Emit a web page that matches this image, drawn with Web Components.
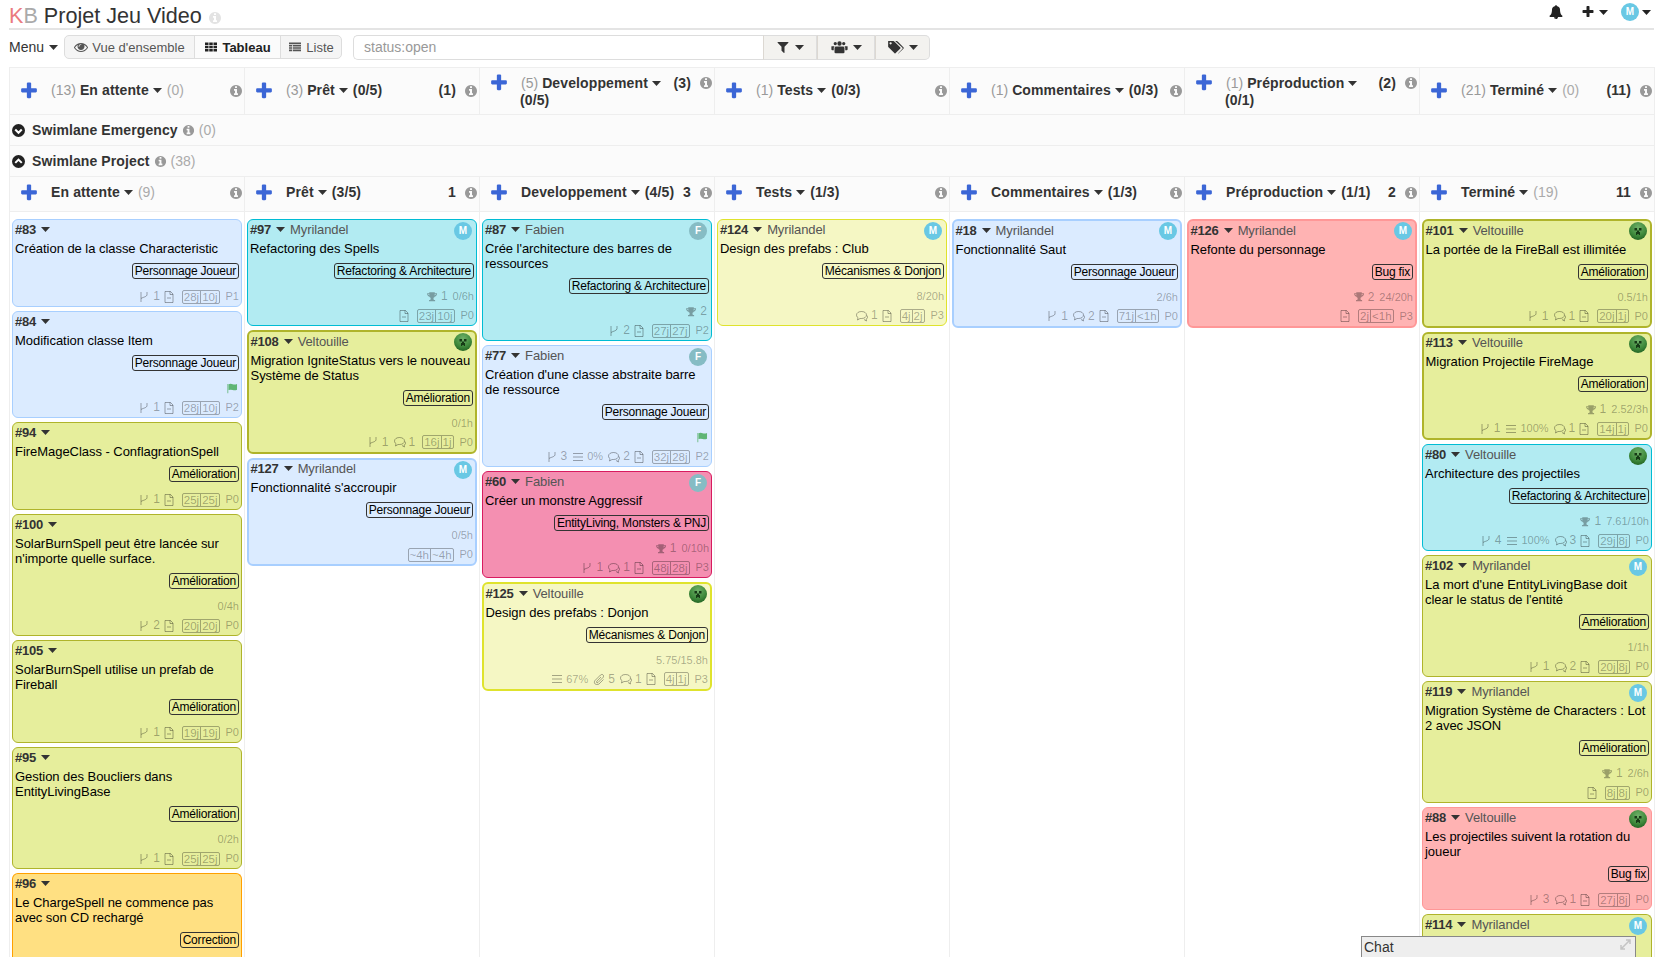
<!DOCTYPE html>
<html lang="fr">
<head>
<meta charset="utf-8">
<title>Projet Jeu Video</title>
<style>
    html, body { margin: 0; height: 957px; overflow: hidden; background: #fff; }
    body { font: 14px "Liberation Sans", Arial, sans-serif; color: #333; }
</style>
</head>
<body>
<kb-page>
    <kb-topbar slot="top"></kb-topbar>
    <kb-toolbar slot="top"></kb-toolbar>
    <kb-board>
        <kb-head total="13" name="En attente" count="(0)"></kb-head>
        <kb-head total="3" name="Prêt" limit="(0/5)" right="(1)"></kb-head>
        <kb-head total="5" name="Developpement" wrap="(0/5)" right="(3)"></kb-head>
        <kb-head total="1" name="Tests" limit="(0/3)"></kb-head>
        <kb-head total="1" name="Commentaires" limit="(0/3)"></kb-head>
        <kb-head total="1" name="Préproduction" wrap="(0/1)" right="(2)"></kb-head>
        <kb-head total="21" name="Terminé" count="(0)" right="(11)"></kb-head>

        <kb-swimlane name="Swimlane Emergency" count="(0)" closed></kb-swimlane>
        <kb-swimlane name="Swimlane Project" count="(38)"></kb-swimlane>

        <kb-head sub name="En attente" count="(9)"></kb-head>
        <kb-head sub name="Prêt" limit="(3/5)" right="1"></kb-head>
        <kb-head sub name="Developpement" limit="(4/5)" right="3"></kb-head>
        <kb-head sub name="Tests" limit="(1/3)"></kb-head>
        <kb-head sub name="Commentaires" limit="(1/3)"></kb-head>
        <kb-head sub name="Préproduction" limit="(1/1)" right="2"></kb-head>
        <kb-head sub name="Terminé" count="(19)" right="11"></kb-head>

        <kb-column>
            <kb-task num="83" color="blue" tag="Personnage Joueur" fork="1" file dates="28j,10j" prio="P1">Création de la classe Characteristic</kb-task>
            <kb-task num="84" color="blue" tag="Personnage Joueur" flag fork="1" file dates="28j,10j" prio="P2">Modification classe Item</kb-task>
            <kb-task num="94" color="lime" tag="Amélioration" fork="1" file dates="25j,25j" prio="P0">FireMageClass - ConflagrationSpell</kb-task>
            <kb-task num="100" color="lime" tag="Amélioration" time="0/4h" fork="2" file dates="20j,20j" prio="P0">SolarBurnSpell peut être lancée sur n'importe quelle surface.</kb-task>
            <kb-task num="105" color="lime" tag="Amélioration" fork="1" file dates="19j,19j" prio="P0">SolarBurnSpell utilise un prefab de Fireball</kb-task>
            <kb-task num="95" color="lime" tag="Amélioration" time="0/2h" fork="1" file dates="25j,25j" prio="P0">Gestion des Boucliers dans EntityLivingBase</kb-task>
            <kb-task num="96" color="amber" tag="Correction" cut="85">Le ChargeSpell ne commence pas avec son CD rechargé</kb-task>
        </kb-column>
        <kb-column>
            <kb-task num="97" owner="Myrilandel" avatar="M" color="cyan" tag="Refactoring &amp; Architecture" trophy="1" time="0/6h" file dates="23j,10j" prio="P0">Refactoring des Spells</kb-task>
            <kb-task num="108" owner="Veltouille" avatar="creeper" color="lime" thick tag="Amélioration" time="0/1h" fork="1" cmt="1" dates="16j,1j" prio="P0">Migration IgniteStatus vers le nouveau Système de Status</kb-task>
            <kb-task num="127" owner="Myrilandel" avatar="M" color="blue" thick tag="Personnage Joueur" time="0/5h" dates="~4h,~4h" prio="P0">Fonctionnalité s'accroupir</kb-task>
        </kb-column>
        <kb-column>
            <kb-task num="87" owner="Fabien" avatar="F" color="cyan" tag="Refactoring &amp; Architecture" trophy="2" fork="2" file dates="27j,27j" prio="P2">Crée l'architecture des barres de ressources</kb-task>
            <kb-task num="77" owner="Fabien" avatar="F" color="blue" tag="Personnage Joueur" flag fork="3" pct="0%" cmt="2" file dates="32j,28j" prio="P2">Création d'une classe abstraite barre de ressource</kb-task>
            <kb-task num="60" owner="Fabien" avatar="F" color="pink" tag="EntityLiving, Monsters &amp; PNJ" trophy="1" time="0/10h" fork="1" cmt="1" file dates="48j,28j" prio="P3">Créer un monstre Aggressif</kb-task>
            <kb-task num="125" owner="Veltouille" avatar="creeper" color="yellow" thick tag="Mécanismes &amp; Donjon" time="5.75/15.8h" pct="67%" clip="5" cmt="1" file dates="4j,1j" prio="P3">Design des prefabs : Donjon</kb-task>
        </kb-column>
        <kb-column>
            <kb-task num="124" owner="Myrilandel" avatar="M" color="yellow" tag="Mécanismes &amp; Donjon" time="8/20h" cmt="1" file dates="4j,2j" prio="P3">Design des prefabs : Club</kb-task>
        </kb-column>
        <kb-column>
            <kb-task num="18" owner="Myrilandel" avatar="M" color="blue" thick tag="Personnage Joueur" time="2/6h" fork="1" cmt="2" file dates="71j,&lt;1h" prio="P0">Fonctionnalité Saut</kb-task>
        </kb-column>
        <kb-column>
            <kb-task num="126" owner="Myrilandel" avatar="M" color="red" thick tag="Bug fix" trophy="2" time="24/20h" file dates="2j,&lt;1h" prio="P3">Refonte du personnage</kb-task>
        </kb-column>
        <kb-column>
            <kb-task num="101" owner="Veltouille" avatar="creeper" color="lime" thick tag="Amélioration" time="0.5/1h" fork="1" cmt="1" file dates="20j,1j" prio="P0">La portée de la FireBall est illimitée</kb-task>
            <kb-task num="113" owner="Veltouille" avatar="creeper" color="lime" thick tag="Amélioration" trophy="1" time="2.52/3h" fork="1" pct="100%" cmt="1" file dates="14j,1j" prio="P0">Migration Projectile FireMage</kb-task>
            <kb-task num="80" owner="Veltouille" avatar="creeper" color="cyan" tag="Refactoring &amp; Architecture" trophy="1" time="7.61/10h" fork="4" pct="100%" cmt="3" file dates="29j,8j" prio="P0">Architecture des projectiles</kb-task>
            <kb-task num="102" owner="Myrilandel" avatar="M" color="lime" tag="Amélioration" time="1/1h" fork="1" cmt="2" file dates="20j,8j" prio="P0">La mort d'une EntityLivingBase doit clear le status de l'entité</kb-task>
            <kb-task num="119" owner="Myrilandel" avatar="M" color="lime" tag="Amélioration" trophy="1" time="2/6h" file dates="8j,8j" prio="P0">Migration Système de Characters : Lot 2 avec JSON</kb-task>
            <kb-task num="88" owner="Veltouille" avatar="creeper" color="red" tag="Bug fix" fork="3" cmt="1" file dates="27j,8j" prio="P0">Les projectiles suivent la rotation du joueur</kb-task>
            <kb-task num="114" owner="Myrilandel" avatar="M" color="lime" cut="44"></kb-task>
        </kb-column>
    </kb-board>
</kb-page>
<kb-chat></kb-chat>

<script>
// font-awesome style icons, on the 1792 grid
const FA = {
    plus: 'M1600 736v192q0 40-28 68t-68 28h-416v416q0 40-28 68t-68 28h-192q-40 0-68-28t-28-68v-416h-416q-40 0-68-28t-28-68v-192q0-40 28-68t68-28h416v-416q0-40 28-68t68-28h192q40 0 68 28t28 68v416h416q40 0 68 28t28 68z',
    info: 'M1152 1376v-160q0-14-9-23t-23-9h-96v-512q0-14-9-23t-23-9h-320q-14 0-23 9t-9 23v160q0 14 9 23t23 9h96v320h-96q-14 0-23 9t-9 23v160q0 14 9 23t23 9h448q14 0 23-9t9-23zm-128-896v-160q0-14-9-23t-23-9h-192q-14 0-23 9t-9 23v160q0 14 9 23t23 9h192q14 0 23-9t9-23zm640 416q0 209-103 385.5t-279.5 279.5-385.5 103-385.5-103-279.5-279.5-103-385.5 103-385.5 279.5-279.5 385.5-103 385.5 103 279.5 279.5 103 385.5z',
    bell: 'M912 1696q0-16-16-16-59 0-101.500-42.500t-42.500-101.500q0-16-16-16t-16 16q0 73 51.500 124.500t124.500 51.500q16 0 16-16zm816-288q0 52-38 90t-90 38h-448q0 106-75 181t-181 75-181-75-75-181h-448q-52 0-90-38t-38-90q50-42 91-88t85-119.500 74.500-158.500 50-206 19.500-260q0-152 117-282.500t307-158.500q-8-19-8-39 0-40 28-68t68-28 68 28 28 68q0 20-8 39 190 28 307 158.500t117 282.500q0 139 19.500 260t50 206 74.500 158.500 85 119.500 91 88z',
    filter: 'M1595 295q17 41-14 70l-493 493v742q0 42-39 59-13 5-25 5-27 0-45-19l-256-256q-19-19-19-45v-486l-493-493q-31-29-14-70 17-39 59-39h1280q42 0 59 39z',
    eye: 'M1664 960q-152-236-381-353 61 104 61 225 0 185-131.500 316.500t-316.500 131.500-316.500-131.500-131.500-316.500q0-121 61-225-229 117-381 353 133 205 333.500 326.500t434.500 121.500 434.500-121.500 333.500-326.500zm-720-384q0-20-14-34t-34-14q-125 0-214.500 89.500t-89.500 214.500q0 20 14 34t34 14 34-14 14-34q0-86 61-147t147-61q20 0 34-14t14-34zm848 384q0 34-20 69-140 230-376.500 368.500t-499.500 138.500-499.500-139-376.500-368q-20-35-20-69t20-69q140-229 376.500-368t499.500-139 499.500 139 376.500 368q20 35 20 69z',
    th: 'M128 320h448v320h-448zM672 320h448v320h-448zM1216 320h448v320h-448zM128 736h448v320h-448zM672 736h448v320h-448zM1216 736h448v320h-448zM128 1152h448v320h-448zM672 1152h448v320h-448zM1216 1152h448v320h-448z',
    list: 'M128 320h1536v224h-1536zM128 640h400v192h-400zM620 640h1044v192h-1044zM128 928h400v192h-400zM620 928h1044v192h-1044zM128 1216h400v224h-400zM620 1216h1044v224h-1044z',
    users: 'M896 700a230 230 0 1 0 0-460 230 230 0 0 0 0 460zM450 660a175 175 0 1 0 0-350 175 175 0 0 0 0 350zM1342 660a175 175 0 1 0 0-350 175 175 0 0 0 0 350zM500 800h792q130 0 130 170v420q0 120-130 120h-792q-130 0-130-120v-420q0-170 130-170zM60 760h320q-90 60-90 220v200h-150q-100 0-100-90v-200q0-130 20-130zM1412 760h320q20 0 20 130v200q0 90-100 90h-150v-200q0-160-90-220z',
    tags: 'M120 220h560q50 0 90 40l640 640q40 40 0 90l-520 520q-50 40-90 0l-640-640q-40-40-40-90zM380 570a120 120 0 1 0 0-240 120 120 0 0 0 0 240zM860 220h180q50 0 90 40l620 640q40 40 0 90l-520 520q-30 30-70 20l470-490q60-70 0-130z',
    trophy: 'M480 200h832v130h300q40 0 40 60 0 170-90 290t-270 170q-60 110-170 170v190q0 60 40 100t110 40h60q30 0 30 40v130h-912v-130q0-40 30-40h60q70 0 110-40t40-100v-190q-110-60-170-170-180-50-270-170t-90-290q0-60 40-60h300zM320 460q10 120 200 220-30-100-40-220zM1472 460h-160q-10 120-40 220 190-100 200-220z',
    flag: 'M200 260h110v1300h-110zM360 300q280-110 560 0t600-30v800q-300 130-600 30t-560 10z'
};

function fa(name, size, color) {
    return `<svg width="${size}" height="${size}" viewBox="0 0 1792 1792" fill="${color || 'currentColor'}" style="display:block;flex:none"><path fill-rule="evenodd" d="${FA[name]}"/></svg>`;
}

function caret(color) {
    return `<svg width="9" height="5" viewBox="0 0 9 5" style="display:block;flex:none"><path d="M0 0h9L4.500 5z" fill="${color || 'currentColor'}"/></svg>`;
}

// thin line icons of the card footer, drawn on a 12 grid
const LINE = {
    fork: '<path d="M3 1v10M9 1v2.500C9 6 5 6 3 7.500"/>',
    file: '<path d="M2 .5h5.500L10 3v8.500H2zM7 .5V3.500H10M4 7h4"/>',
    cmt: '<path d="M.5 5C.5 3 2.500 1.500 5.500 1.500S10.500 3 10.500 5 8.500 8.500 5.500 8.500H4L1.500 10l.5-2.300C1 7 .5 6 .5 5z"/><path d="M11 5.500c1 .7 1 3-1 3.800l.5 1.700-2.500-1.500"/>',
    bars: '<path d="M1 2.500h10M1 6h10M1 9.500h10"/>',
    clip: '<path d="M10.500 6.500 6 11C3 13 0 10 2 7.500L7.500 2C9.500.5 11.500 2.500 10 4.500L5 9.500C4 10.300 3 9.300 3.800 8.300L8 4"/>'
};

function line(name) {
    return `<svg width="12" height="12" viewBox="0 0 12 12" fill="none" stroke="currentColor" stroke-width="1" style="display:block;flex:none">${LINE[name]}</svg>`;
}

class KbPage extends HTMLElement {
    constructor() {
        super();
        this.attachShadow({ mode: 'open' });
        this.shadowRoot.innerHTML = `
            <style>
                :host { display: block; padding: 0 17px 0 9px; }
            </style>
            <slot name="top"></slot>
            <slot></slot>
        `;
    }
}

class KbTopbar extends HTMLElement {
    constructor() {
        super();
        this.attachShadow({ mode: 'open' });
        this.shadowRoot.innerHTML = `
            <style>
                :host {
                    display: flex;
                    align-items: center;
                    height: 28px;
                    border-bottom: 2px solid #e4e4e4;
                    color: #333;
                }
                h1 { margin: 4px 0 0; font: normal 21.6px/24px "Liberation Sans", Arial, sans-serif; color: #333; }
                .k { color: #ea7a7f; }
                .b { color: #aaa; }
                .hint { margin: 7px 0 0 6px; }
                .actions { margin-left: auto; margin-bottom: 4px; display: flex; align-items: center; color: #222; padding-right: 3px; }
                .av {
                    width: 18px; height: 18px; border-radius: 50%;
                    background: #69c8e4; color: #fff;
                    font: bold 10px/18px "Liberation Sans", Arial, sans-serif;
                    text-align: center;
                }
            </style>
            <h1><span class="k">K</span><span class="b">B</span> Projet Jeu Video</h1>
            <span class="hint">${fa('info', 14, '#e3e3e3')}</span>
            <div class="actions">
                ${fa('bell', 14)}
                <span style="width:18px"></span>
                ${fa('plus', 14)}
                <span style="width:4px"></span>
                ${caret()}
                <span style="width:13px"></span>
                <span class="av">M</span>
                <span style="width:3px"></span>
                ${caret()}
            </div>
        `;
    }
}

class KbToolbar extends HTMLElement {
    constructor() {
        super();
        this.attachShadow({ mode: 'open' });
        this.shadowRoot.innerHTML = `
            <style>
                :host {
                    display: flex;
                    align-items: center;
                    height: 24px;
                    margin-top: 5px;
                    margin-bottom: 8px;
                    font-size: 14px;
                    color: #444;
                }
                .menu { display: flex; align-items: center; gap: 5px; width: 55px; color: #333; }
                .views { display: flex; height: 24px; border: 1px solid #ddd; border-radius: 5px; background: #f5f5f5; box-sizing: border-box; width: 278px; font-size: 13px; }
                .views span { display: flex; align-items: center; justify-content: center; gap: 4px; border-left: 1px solid #ddd; color: #555; }
                .views span:first-child { border-left: 0; width: 129px; }
                .views span.on { width: 85px; background: #fbfbfb; color: #222; font-weight: bold; }
                .views span.last { flex: 1; }
                .search { display: flex; height: 25px; margin-left: 11px; width: 577px; }
                .input {
                    width: 410px; box-sizing: border-box;
                    border: 1px solid #ddd; border-right: 0; border-radius: 5px 0 0 5px;
                    padding: 0 10px; line-height: 23px; color: #999; font-size: 14px;
                }
                .filter {
                    display: flex; align-items: center; justify-content: center; gap: 5px;
                    background: #f3f2ef; border: 1px solid #ddd; border-left: 1px solid #dcd8d2;
                    box-sizing: border-box; color: #333;
                }
                .filter.end { border-radius: 0 5px 5px 0; }
            </style>
            <div class="menu">Menu ${caret()}</div>
            <div class="views">
                <span>${fa('eye', 14)}Vue d'ensemble</span>
                <span class="on">${fa('th', 14)}Tableau</span>
                <span class="last">${fa('list', 14)}Liste</span>
            </div>
            <div class="search">
                <div class="input">status:open</div>
                <div class="filter" style="width:54px">${fa('filter', 14)}${caret()}</div>
                <div class="filter" style="width:58px">${fa('users', 17)}${caret()}</div>
                <div class="filter end" style="width:55px">${fa('tags', 17)}${caret()}</div>
            </div>
        `;
    }
}

class KbBoard extends HTMLElement {
    constructor() {
        super();
        this.attachShadow({ mode: 'open' });
        this.shadowRoot.innerHTML = `
            <style>
                :host {
                    display: grid;
                    grid-template-columns: repeat(7, 235px);
                    grid-auto-rows: min-content;
                    border-top: 1px solid #eee;
                    border-left: 1px solid #eee;
                    width: 1645px;
                }
            </style>
            <slot></slot>
        `;
    }
}

class KbHead extends HTMLElement {
    constructor() {
        super();
        this.attachShadow({ mode: 'open' });
        const a = n => this.getAttribute(n);
        const sub = this.hasAttribute('sub');
        this.shadowRoot.innerHTML = `
            <style>
                :host {
                    display: flex;
                    flex-direction: column;
                    justify-content: center;
                    box-sizing: border-box;
                    height: ${sub ? 35 : 47}px;
                    padding-bottom: ${sub ? 3 : 1}px;
                    background: #fbfbfb;
                    border-right: 1px solid #eee;
                    border-bottom: 1px solid #eee;
                    font-size: 14px;
                    color: #333;
                    line-height: 15px;
                }
                .row { display: flex; align-items: center; padding-left: 9px; padding-right: 1px; }
                .plus { width: 32px; flex: none; }
                .total { color: #999; margin-right: 4px; }
                .name { font-weight: bold; letter-spacing: .12px; white-space: nowrap; }
                .caret { margin: 0 5px 0 4px; }
                .grey { color: #aaa; }
                .lim { font-weight: bold; letter-spacing: .12px; }
                .right { margin-left: auto; font-weight: bold; letter-spacing: .12px; }
                .info { margin-left: 8px; }
                .second { padding-left: 40px; font-weight: bold; letter-spacing: .12px; }
            </style>
            <div class="row">
                <span class="plus">${fa('plus', 20, '#3b66d6')}</span>
                ${a('total') ? `<span class="total">(${a('total')})</span>` : ''}
                <span class="name">${a('name')}</span>
                <span class="caret">${caret()}</span>
                ${a('count') ? `<span class="grey">${a('count')}</span>` : ''}
                ${a('limit') ? `<span class="lim">${a('limit')}</span>` : ''}
                ${a('right') ? `<span class="right">${a('right')}</span>` : ''}
                <span class="info" style="${a('right') ? '' : 'margin-left:auto'}">${fa('info', 14, '#999')}</span>
            </div>
            ${a('wrap') ? `<div class="second">${a('wrap')}</div>` : ''}
        `;
    }
}

class KbSwimlane extends HTMLElement {
    constructor() {
        super();
        this.attachShadow({ mode: 'open' });
        const closed = this.hasAttribute('closed');
        const chev = closed ? 'M3.500 6 7 9.500 10.500 6' : 'M3.500 8.500 7 5 10.500 8.500';
        this.shadowRoot.innerHTML = `
            <style>
                :host {
                    grid-column: 1 / -1;
                    display: flex;
                    align-items: center;
                    gap: 4px;
                    box-sizing: border-box;
                    height: 31px;
                    padding: 0 0 0 2px;
                    background: #fbfbfb;
                    border-right: 1px solid #eee;
                    border-bottom: 1px solid #eee;
                    font-size: 14px;
                    color: #333;
                }
                .name { font-weight: bold; letter-spacing: .1px; margin-left: 3px; }
                .n { color: #aaa; }
            </style>
            <svg width="13" height="13" viewBox="0 0 14 14" style="display:block">
                <circle cx="7" cy="7" r="7" fill="#222"/>
                <path d="${chev}" fill="none" stroke="#fff" stroke-width="2.200"/>
            </svg>
            <span class="name">${this.getAttribute('name')}</span>
            ${fa('info', 13, '#999')}
            <span class="n">${this.getAttribute('count')}</span>
        `;
    }
}

class KbColumn extends HTMLElement {
    constructor() {
        super();
        this.attachShadow({ mode: 'open' });
        this.shadowRoot.innerHTML = `
            <style>
                :host {
                    display: block;
                    box-sizing: border-box;
                    padding: 7px 2px 0 2px;
                    min-height: 745px;
                    border-right: 1px solid #eee;
                }
            </style>
            <slot></slot>
        `;
    }
}

const COLORS = {
    blue: ['#dbebff', '#a8cfff'],
    lime: ['#e6ee9c', '#afb42b'],
    cyan: ['#b2ebf2', '#00bcd4'],
    pink: ['#f48fb1', '#d81b60'],
    red: ['#ffb3b3', '#ff9797'],
    yellow: ['#f5f7c4', '#dfe32d'],
    amber: ['#ffe082', '#ffa000']
};

let creeperId = 0;

class KbTask extends HTMLElement {
    constructor() {
        super();
        this.attachShadow({ mode: 'open' });
    }

    connectedCallback() {
        const a = n => this.getAttribute(n);
        const has = n => this.hasAttribute(n);
        const [bg, line_] = COLORS[a('color')];
        const thick = has('thick');
        const cut = a('cut');
        const dates = (a('dates') || '').split(',');
        const hasTimeRow = a('time') || a('trophy');

        let avatar = '';
        if (a('avatar') === 'creeper') {
            const id = 'creeper' + (++creeperId);
            avatar = `<svg class="av" width="18" height="18" viewBox="0 0 18 18">
                <defs><radialGradient id="${id}" cx="50%" cy="30%" r="75%"><stop offset="0" stop-color="#6fb069"/><stop offset=".6" stop-color="#3f8a3c"/><stop offset="1" stop-color="#1f5f20"/></radialGradient></defs>
                <circle cx="9" cy="9" r="9" fill="url(#${id})"/>
                <path d="M5.500 6h2.500v2.500H5.500zM10 6h2.500v2.500H10zM8 8.500h2V10h1v3H9.800v-1H8.200v1H7v-3h1z" fill="#163a16"/>
            </svg>`;
        } else if (a('avatar')) {
            const c = a('avatar') === 'F' ? '#86bcc4' : '#69c8e4';
            avatar = `<span class="av text" style="background:${c}">${a('avatar')}</span>`;
        }

        this.shadowRoot.innerHTML = `
            <style>
                :host {
                    display: block;
                    position: relative;
                    box-sizing: border-box;
                    margin: 0 0 ${cut ? 0 : 4}px;
                    padding: ${thick ? '1px' : '0'} 2px 0 ${thick ? 1.5 : 2}px;
                    ${cut ? `height: ${cut}px; overflow: hidden;` : ''}
                    border: ${thick ? 2 : 1}px solid ${line_};
                    ${cut ? 'border-bottom: 0;' : ''}
                    border-radius: 6px;
                    ${cut ? 'border-bottom-left-radius: 0; border-bottom-right-radius: 0;' : ''}
                    background: ${bg};
                    width: 230px;
                    font-size: 13px;
                    line-height: 15px;
                    color: #000;
                }
                .head { display: flex; align-items: center; height: ${thick ? 16.5 : 18}px; color: #555; letter-spacing: -.1px; }
                .num { font-weight: bold; color: #333; letter-spacing: -.2px; }
                .caret { margin: 0 5px 0 5px; color: #333; }
                .av { position: absolute; top: ${thick ? 1 : 2}px; right: ${thick ? 3 : 4}px; display: block; }
                .text {
                    width: 18px; height: 18px; border-radius: 50%; color: #fff;
                    font: bold 10px/18px "Liberation Sans", Arial, sans-serif; text-align: center;
                }
                .title { margin-top: 3px; padding-right: 2px; min-height: 15px; letter-spacing: -.04px; }
                .tags { display: flex; justify-content: flex-end; margin-top: 7px; }
                .tag {
                    height: 14px; line-height: 14px;
                    border: 1px solid #333; border-radius: 3px;
                    padding: 0 2px; font-size: 12px; letter-spacing: -.2px; white-space: nowrap;
                }
                .meta {
                    display: flex; justify-content: flex-end; align-items: center; gap: 3px;
                    height: 19px; font-size: 11px; color: rgba(0,0,0,.33); white-space: nowrap;
                }
                .tags + .meta { margin-top: 8px; }
                .item { display: flex; align-items: center; gap: 3px; }
                .pct { margin-left: 2px; }
                .cm { margin-left: 2px; }
                .flag { color: #5fb575; }
                .dates {
                    display: flex; height: 12px; line-height: 12px; font-size: 11.5px;
                    border: 1px solid rgba(0,0,0,.3); border-radius: 2px;
                    margin: 0 3px 0 4px;
                }
                .dates span { padding: 0 1px; }
                .dates span + span { border-left: 1px solid rgba(0,0,0,.3); }
                .strong { font-size: 12px; }
            </style>
            <div class="head">
                <span class="num">#${a('num')}</span>
                <span class="caret">${caret()}</span>
                ${a('owner') ? `<span>${a('owner')}</span>` : ''}
            </div>
            ${avatar}
            <div class="title"><slot></slot></div>
            ${a('tag') ? `<div class="tags"><span class="tag">${a('tag')}</span></div>` : ''}
            ${has('flag') ? `<div class="meta flag">${fa('flag', 13)}</div>` : ''}
            ${hasTimeRow ? `<div class="meta">
                ${a('trophy') ? `<span class="item" style="margin-right:2px">${fa('trophy', 12)}<span class="strong">${a('trophy')}</span></span>` : ''}
                ${a('time') ? `<span>${a('time')}</span>` : ''}
            </div>` : ''}
            ${cut ? '' : `<div class="meta">
                ${a('fork') ? `<span class="item">${line('fork')}<span class="strong">${a('fork')}</span></span>` : ''}
                ${a('pct') ? `<span class="item pct">${line('bars')}<span>${a('pct')}</span></span>` : ''}
                ${a('clip') ? `<span class="item pct">${line('clip')}<span class="strong">${a('clip')}</span></span>` : ''}
                ${a('cmt') ? `<span class="item cm">${line('cmt')}<span class="strong">${a('cmt')}</span></span>` : ''}
                ${has('file') ? `<span class="item">${line('file')}</span>` : ''}
                <span class="dates"><span>${dates[0]}</span><span>${dates[1]}</span></span>
                <span>${a('prio')}</span>
            </div>`}
        `;
    }
}

class KbChat extends HTMLElement {
    constructor() {
        super();
        this.attachShadow({ mode: 'open' });
        this.shadowRoot.innerHTML = `
            <style>
                :host {
                    position: fixed;
                    left: 1361px;
                    top: 936px;
                    width: 275px;
                    height: 21px;
                    box-sizing: border-box;
                    background: #eee;
                    border: 1px solid #888;
                    border-bottom: 0;
                    padding: 1px 2px;
                    font-size: 14px;
                    line-height: 18px;
                    color: #333;
                    display: flex;
                    justify-content: space-between;
                }
                svg { margin: 1px 2px 0 0; }
            </style>
            <span>Chat</span>
            <svg width="11" height="11" viewBox="0 0 11 11"><path d="M1 10 10 1M6 1h4v4M1 6v4h4" fill="none" stroke="#c4c4c4" stroke-width="1.500"/></svg>
        `;
    }
}

customElements.define('kb-page', KbPage);
customElements.define('kb-topbar', KbTopbar);
customElements.define('kb-toolbar', KbToolbar);
customElements.define('kb-board', KbBoard);
customElements.define('kb-head', KbHead);
customElements.define('kb-swimlane', KbSwimlane);
customElements.define('kb-column', KbColumn);
customElements.define('kb-task', KbTask);
customElements.define('kb-chat', KbChat);
</script>
</body>
</html>
